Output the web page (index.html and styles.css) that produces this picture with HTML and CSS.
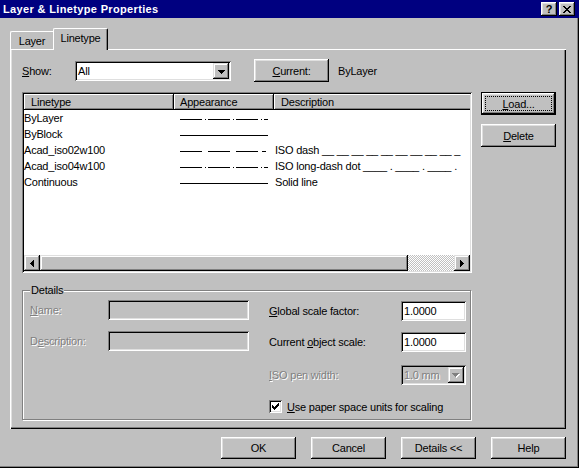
FILE: index.html
```html
<!DOCTYPE html>
<html>
<head>
<meta charset="utf-8">
<title>Layer &amp; Linetype Properties</title>
<link rel="stylesheet" href="styles.css">
</head>
<body>
<div class="window">
  <div class="titlebar">
    <span class="title">Layer &amp; Linetype Properties</span>
    <div class="title-btns">
      <span class="tbtn">?</span>
      <span class="tbtn">
        <svg width="8" height="7" viewBox="0 0 8 7" shape-rendering="crispEdges"><path d="M0 0H2V1H3V2H5V1H6V0H8V1H7V2H6V3H5V4H6V5H7V6H8V7H6V6H5V5H3V6H2V7H0V6H1V5H2V4H3V3H2V2H1V1H0Z" fill="#000"/></svg>
      </span>
    </div>
  </div>

  <div class="client">
    <div class="tabstrip">
      <div class="tab inactive">Layer</div>
      <div class="tab active">Linetype</div>
      <div class="tab-fill"></div>
    </div>

    <div class="panel">
      <div class="show-row">
        <span class="show-lbl"><u>S</u>how:</span>
        <div class="combo">
          <span class="combo-val">All</span>
          <span class="drop"><svg width="7" height="4" viewBox="0 0 7 4" shape-rendering="crispEdges"><path d="M0 0H7V1H6V2H5V3H4V4H3V3H2V2H1V1H0Z" fill="#000"/></svg></span>
        </div>
        <button class="btn current-btn"><u>C</u>urrent:</button>
        <span class="cur-val">ByLayer</span>
      </div>

      <div class="list-row">
        <div class="listview">
          <div class="lv-inner">
            <div class="lv-header">
              <div class="hcell c1">Linetype</div>
              <div class="hcell c2">Appearance</div>
              <div class="hcell c3">Description</div>
            </div>
            <div class="lv-body">
              <div class="lv-row">
                <span class="col1">ByLayer</span>
                <span class="col2"><svg width="89" height="16" shape-rendering="crispEdges"><path d="M0 9.5H22M25 9.5H26M28 9.5H50M53 9.5H54M56 9.5H78M81 9.5H82M84 9.5H88" stroke="#000"/></svg></span>
                <span class="col3"></span>
              </div>
              <div class="lv-row">
                <span class="col1">ByBlock</span>
                <span class="col2"><svg width="89" height="16" shape-rendering="crispEdges"><path d="M0 9.5H88" stroke="#000"/></svg></span>
                <span class="col3"></span>
              </div>
              <div class="lv-row">
                <span class="col1">Acad_iso02w100</span>
                <span class="col2"><svg width="89" height="16" shape-rendering="crispEdges"><path d="M0 9.5H22M28 9.5H50M56 9.5H78M82 9.5H86" stroke="#000"/></svg></span>
                <span class="col3">ISO dash __ __ __ __ __ __ __ __ __ _</span>
              </div>
              <div class="lv-row">
                <span class="col1">Acad_iso04w100</span>
                <span class="col2"><svg width="89" height="16" shape-rendering="crispEdges"><path d="M0 9.5H22M25 9.5H26M28 9.5H50M53 9.5H54M56 9.5H78M81 9.5H82M84 9.5H88" stroke="#000"/></svg></span>
                <span class="col3">ISO long-dash dot ____ . ____ . ____ .</span>
              </div>
              <div class="lv-row">
                <span class="col1">Continuous</span>
                <span class="col2"><svg width="89" height="16" shape-rendering="crispEdges"><path d="M0 9.5H88" stroke="#000"/></svg></span>
                <span class="col3">Solid line</span>
              </div>
            </div>
            <div class="hscroll">
              <span class="sbtn"><svg width="4" height="7" viewBox="0 0 4 7" shape-rendering="crispEdges"><path d="M0 3H1V2H2V1H3V0H4V7H3V6H2V5H1V4H0Z" fill="#000"/></svg></span>
              <span class="sthumb"></span>
              <span class="strack"></span>
              <span class="sbtn"><svg width="4" height="7" viewBox="0 0 4 7" shape-rendering="crispEdges"><path d="M0 0H1V1H2V2H3V3H4V4H3V5H2V6H1V7H0Z" fill="#000"/></svg></span>
            </div>
          </div>
        </div>
        <div class="side-btns">
          <button class="btn default-btn"><span class="focus"><u>L</u>oad...</span></button>
          <button class="btn side"><u>D</u>elete</button>
        </div>
      </div>

      <fieldset class="details">
        <legend>Details</legend>
        <div class="dgrid">
          <div class="dleft">
            <span class="dis"><u>N</u>ame:</span>
            <span class="field gray"></span>
            <span class="dis">D<u>e</u>scription:</span>
            <span class="field gray"></span>
          </div>
          <div class="dright">
            <div class="frow">
              <span class="flabel"><u>G</u>lobal scale factor:</span>
              <span class="field">1.0000</span>
            </div>
            <div class="frow r2">
              <span class="flabel">Current <u>o</u>bject scale:</span>
              <span class="field">1.0000</span>
            </div>
            <div class="frow r3">
              <span class="flabel dis"><u>I</u>SO pen width:</span>
              <span class="field gray combo-dis">
                <span class="dis cval">1.0 mm</span>
                <span class="drop"><svg width="8" height="5" viewBox="0 0 8 5" shape-rendering="crispEdges"><path d="M1 1H8V2H7V3H6V4H5V5H4V4H3V3H2V2H1Z" fill="#fff"/><path d="M0 0H7V1H6V2H5V3H4V4H3V3H2V2H1V1H0Z" fill="#808080"/></svg></span>
              </span>
            </div>
            <div class="frow r4">
              <span class="checkbox"><svg width="7" height="7" viewBox="0 0 7 7" shape-rendering="crispEdges"><path d="M6 0H7V3H6V4H5V5H4V6H3V7H2V6H1V5H0V2H1V3H2V4H3V3H4V2H5V1H6Z" fill="#000"/></svg></span>
              <span class="cblabel"><u>U</u>se paper space units for scaling</span>
            </div>
          </div>
        </div>
      </fieldset>
    </div>

    <div class="dlg-btns">
      <button class="btn">OK</button>
      <button class="btn">Cancel</button>
      <button class="btn">Details &lt;&lt;</button>
      <button class="btn">Help</button>
    </div>
  </div>
</div>
</body>
</html>
```

FILE: styles.css
```css
* { box-sizing: border-box; }
html, body { margin: 0; padding: 0; background: #fff; }
body {
  font-family: "Liberation Sans", Arial, sans-serif;
  font-size: 11px;
  letter-spacing: -0.2px;
  color: #000;
}
u { text-decoration: underline; text-underline-offset: 1px; }

.window {
  width: 579px;
  height: 468px;
  background: #c0c0c0;
  display: flex;
  flex-direction: column;
  box-shadow: inset -1px -1px #000, inset -2px -2px #808080;
}

.titlebar {
  height: 18px;
  flex-shrink: 0;
  background: #000080;
  color: #fff;
  display: flex;
  align-items: center;
  justify-content: space-between;
  padding: 0 4px 0 3px;
}
.title { font-weight: bold; font-size: 11px; letter-spacing: 0.35px; }
.title-btns { display: flex; gap: 2px; }
.tbtn {
  width: 16px;
  height: 14px;
  background: #c0c0c0;
  box-shadow: inset -1px -1px #000, inset 1px 1px #fff, inset -2px -2px #808080, inset 2px 2px #dfdfdf;
  display: flex;
  align-items: center;
  justify-content: center;
  color: #000;
  font-weight: bold;
  font-size: 11px;
  line-height: 14px;
  letter-spacing: 0;
}

.client {
  flex: 1;
  display: flex;
  flex-direction: column;
  padding: 10px 13px 0 10px;
}

.tabstrip {
  display: flex;
  align-items: flex-end;
  height: 22px;
  flex-shrink: 0;
}
.tab {
  background: #c0c0c0;
  display: flex;
  align-items: center;
  justify-content: center;
}
.tab.inactive {
  width: 43px;
  height: 19px;
  border-top: 1px solid #fff;
  border-left: 1px solid #fff;
  border-bottom: 1px solid #fff;
  border-top-left-radius: 2px;
  padding-bottom: 0;
}
.tab.active {
  width: 55px;
  height: 22px;
  border-top: 1px solid #fff;
  border-left: 1px solid #fff;
  border-right: 1px solid #000;
  border-radius: 2px 2px 0 0;
  box-shadow: inset -1px 0 #808080;
  padding-bottom: 3px;
}
.tab-fill {
  flex: 1;
  height: 1px;
  background: #fff;
}

.panel {
  height: 379px;
  flex-shrink: 0;
  display: flex;
  flex-direction: column;
  padding: 9px 10px 0 12px;
  box-shadow: inset 1px 0 #fff, inset -1px -1px #000, inset -2px -2px #808080, inset 2px 0 #dfdfdf;
}

/* raised button */
.btn {
  font: inherit;
  letter-spacing: inherit;
  color: #000;
  background: #c0c0c0;
  border: none;
  padding: 0;
  width: 75px;
  height: 22px;
  box-shadow: inset -1px -1px #000, inset 1px 1px #fff, inset -2px -2px #808080, inset 2px 2px #dfdfdf;
  display: flex;
  align-items: center;
  justify-content: center;
}

.show-row {
  display: flex;
  align-items: flex-start;
  height: 23px;
  flex-shrink: 0;
}
.show-lbl { width: 53px; padding-top: 6px; line-height: 13px; }
.combo {
  margin-top: 2px;
  width: 156px;
  height: 20px;
  background: #fff;
  box-shadow: inset 1px 1px #808080, inset -1px -1px #fff, inset 2px 2px #000, inset -2px -2px #dfdfdf;
  display: flex;
  padding: 2px;
}
.combo-val { flex: 1; padding-left: 1px; line-height: 16px; }
.drop {
  width: 16px;
  height: 16px;
  background: #c0c0c0;
  box-shadow: inset -1px -1px #000, inset 1px 1px #dfdfdf, inset -2px -2px #808080, inset 2px 2px #fff;
  display: flex;
  align-items: center;
  justify-content: center;
  padding-top: 1px;
}
.current-btn { margin-left: 23px; height: 23px; }
.cur-val { margin-left: 9px; padding-top: 6px; line-height: 13px; }

.list-row {
  display: flex;
  gap: 9px;
  margin-top: 10px;
  flex-shrink: 0;
}
.listview {
  width: 450px;
  height: 181px;
  background: #fff;
  padding: 2px;
  box-shadow: inset 1px 1px #808080, inset -1px -1px #fff, inset 2px 2px #000, inset -2px -2px #dfdfdf;
}
.lv-inner {
  height: 100%;
  overflow: hidden;
  display: flex;
  flex-direction: column;
}
.lv-header { display: flex; height: 16px; flex-shrink: 0; }
.hcell {
  flex-shrink: 0;
  background: #c0c0c0;
  line-height: 16px;
  white-space: nowrap;
  box-shadow: inset -1px -1px #000, inset 1px 1px #fff, inset -2px -2px #808080;
}
.hcell.c1 { width: 150px; padding-left: 7px; }
.hcell.c2 { width: 100px; padding-left: 6px; }
.hcell.c3 { width: 260px; padding-left: 7px; }

.lv-body { flex: 1; }
.lv-row {
  display: grid;
  grid-template-columns: 150px 100px 1fr;
  height: 16px;
  line-height: 16px;
  white-space: nowrap;
}
.col2 { padding-left: 6px; display: flex; }
.col3 { padding-left: 1px; overflow: hidden; }

.hscroll { display: flex; height: 16px; flex-shrink: 0; }
.sbtn {
  width: 16px;
  height: 16px;
  flex-shrink: 0;
  background: #c0c0c0;
  box-shadow: inset -1px -1px #000, inset 1px 1px #dfdfdf, inset -2px -2px #808080, inset 2px 2px #fff;
  display: flex;
  align-items: center;
  justify-content: center;
}
.sthumb {
  width: 368px;
  flex-shrink: 0;
  background: #c0c0c0;
  box-shadow: inset -1px -1px #000, inset 1px 1px #dfdfdf, inset -2px -2px #808080, inset 2px 2px #fff;
}
.strack {
  flex: 1;
  background: repeating-conic-gradient(#fff 0 25%, #c0c0c0 0 50%) 0 0 / 2px 2px;
}

.side-btns { display: flex; flex-direction: column; gap: 9px; }
.side { height: 23px; }
.default-btn {
  height: 23px;
  border: 1px solid #000;
  box-shadow: inset -1px -1px #000, inset 1px 1px #fff, inset -2px -2px #808080, inset 2px 2px #dfdfdf;
  padding: 3px;
  align-items: stretch;
}
.focus {
  flex: 1;
  border: 1px dotted #000;
  display: flex;
  align-items: center;
  justify-content: center;
}

.details {
  margin: 11px 0 0 0;
  width: 449px;
  min-inline-size: 0;
  border: 1px solid #808080;
  box-shadow: inset 1px 1px #fff, 1px 1px #fff;
  padding: 3px 0 6px 7px;
}
.details legend {
  padding: 0 1px;
  line-height: 13px;
  background: #c0c0c0;
}
.dgrid { display: flex; gap: 20px; align-items: flex-start; }
.dleft {
  display: grid;
  grid-template-columns: 78px 141px;
  grid-auto-rows: 20px;
  row-gap: 11px;
  align-items: center;
}
.dright { display: flex; flex-direction: column; margin-top: 1px; }
.frow { display: flex; align-items: center; height: 20px; }
.frow.r2 { margin-top: 11px; }
.frow.r3 { margin-top: 13px; }
.frow.r4 { margin-top: 15px; height: 13px; }
.flabel { width: 132px; }

.dis { color: #808080; text-shadow: 1px 1px #fff; }

.field {
  height: 20px;
  width: 65px;
  background: #fff;
  box-shadow: inset 1px 1px #808080, inset -1px -1px #fff, inset 2px 2px #000, inset -2px -2px #dfdfdf;
  padding: 2px 2px 2px 3px;
  line-height: 16px;
  display: flex;
}
.dleft .field { width: 141px; }
.field.gray { background: #c0c0c0; }
.combo-dis { padding: 2px; }
.cval { flex: 1; padding-left: 1px; }

.checkbox {
  width: 13px;
  height: 13px;
  background: #fff;
  box-shadow: inset 1px 1px #808080, inset -1px -1px #fff, inset 2px 2px #000, inset -2px -2px #dfdfdf;
  display: flex;
  align-items: center;
  justify-content: center;
  flex-shrink: 0;
}
.cblabel { margin-left: 5px; }

.dlg-btns {
  display: flex;
  justify-content: flex-end;
  gap: 15px;
  margin-top: 8px;
}
```
